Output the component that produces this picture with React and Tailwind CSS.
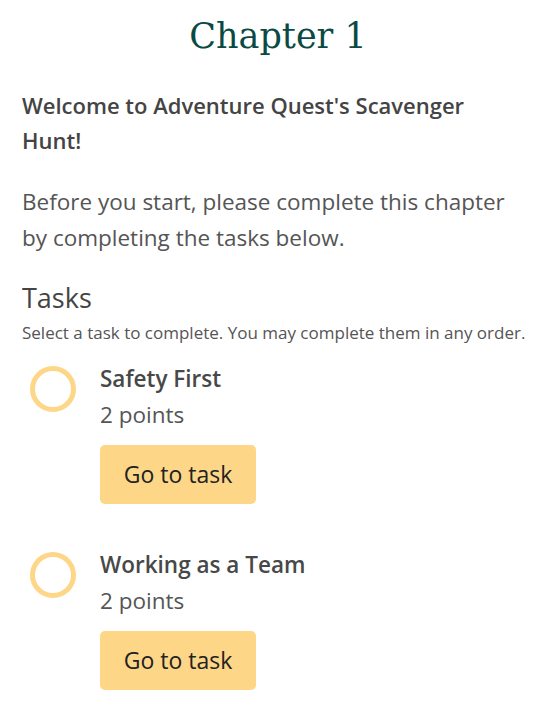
const tasks = [
  { id: 1, title: 'Safety First', points: 2 },
  { id: 2, title: 'Working as a Team', points: 2 },
];

const TaskItem = ({ task }) => (
  <li className="flex items-start">
    <div className="ml-[8px] mt-[5px] h-[46px] w-[46px] shrink-0 rounded-full border-[5px] border-[#fed688]" />
    <div className="ml-[24px] flex flex-col items-start">
      <h3 className="text-[22.5px] font-semibold leading-[36px] text-[#484848]">{task.title}</h3>
      <p className="text-[22.5px] leading-[36px] text-[#555]">{task.points} points</p>
      <button className="mt-[12px] h-[59px] w-[156px] rounded-[5px] bg-[#fed688] text-[23px] text-[#222]">
        Go to task
      </button>
    </div>
  </li>
);

export default function App() {
  return (
    <div className="min-h-screen bg-white px-[22px] pt-[8px] font-['Segoe_UI','Open_Sans',sans-serif] text-[#444]">
      <h1 className="text-center font-['DejaVu_Serif',serif] text-[35px] leading-[56px] text-[#0b4a44]">
        Chapter 1
      </h1>
      <p className="mt-[24px] pr-[20px] text-[22px] font-semibold leading-[35px] text-[#444]">
        Welcome to Adventure Quest's Scavenger Hunt!
      </p>
      <p className="mt-[26px] pr-[10px] text-[22.5px] leading-[36px] text-[#555]">
        Before you start, please complete this chapter by completing the tasks below.
      </p>
      <h2 className="mt-[22px] text-[27px] leading-[40px] text-[#444]">Tasks</h2>
      <p className="mt-[2px] text-[17px] leading-[26px] text-[#555]">
        Select a task to complete. You may complete them in any order.
      </p>
      <ul className="mt-[15px] flex flex-col gap-[43px]">
        {tasks.map(t => (
          <TaskItem key={t.id} task={t} />
        ))}
      </ul>
    </div>
  );
}
